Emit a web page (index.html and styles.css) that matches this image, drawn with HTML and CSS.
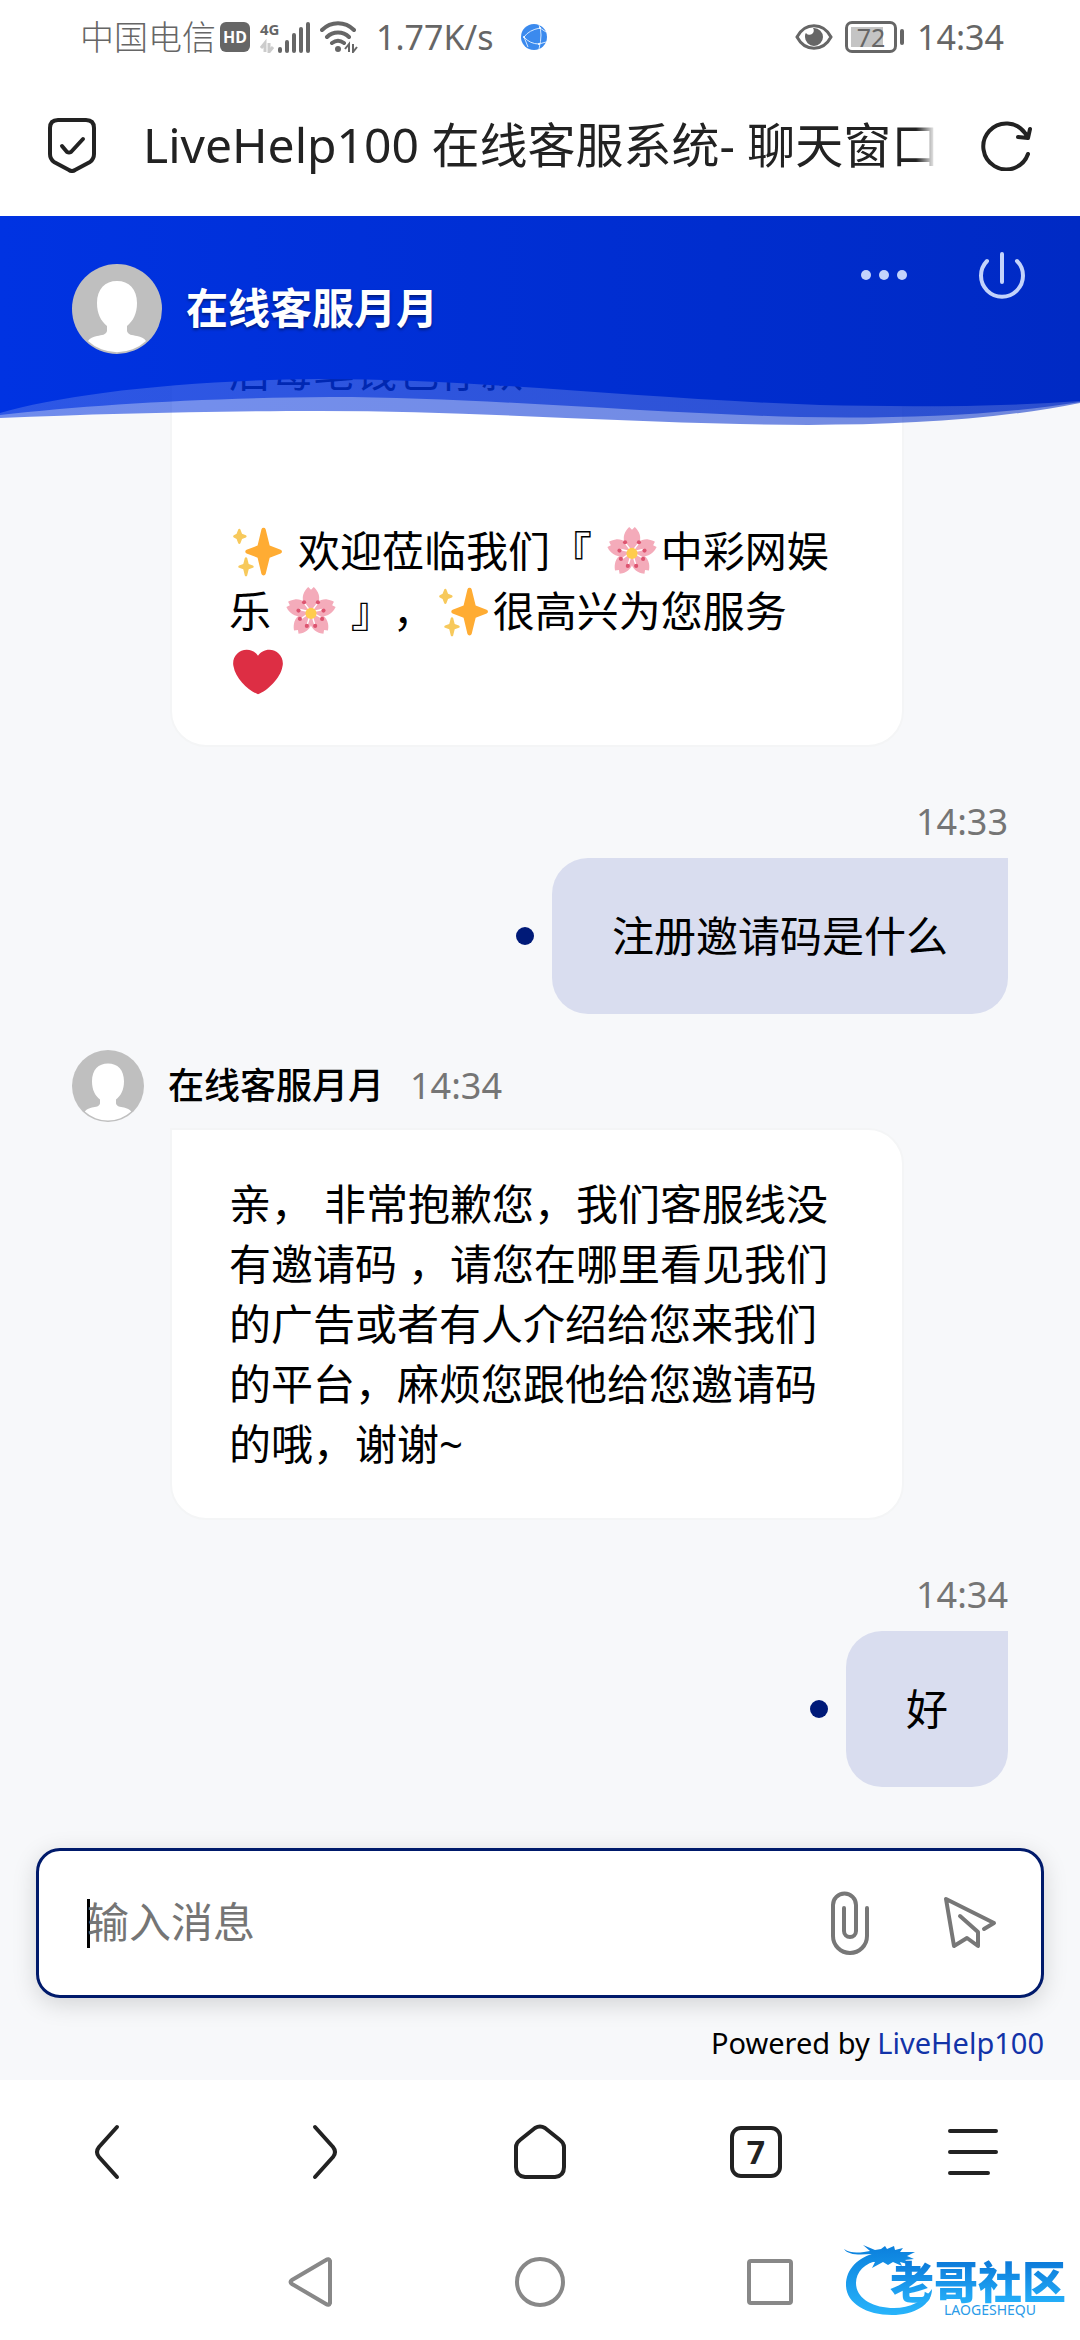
FILE: index.html
```html
<!DOCTYPE html>
<html lang="zh-CN">
  <head>
    <meta charset="utf-8">
    <meta name="viewport" content="width=device-width, initial-scale=1">
    <title>LiveHelp100 在线客服系统- 聊天窗口</title>
    <link rel="stylesheet" href="styles.css">
  </head>
  <body>
    <!-- shared symbols -->
    <svg class="symbols" aria-hidden="true">
      <symbol id="avatar" viewBox="0 0 90 90">
        <circle cx="45" cy="45" r="45" fill="#bfbfbf"/>
        <path d="M45 17c12 0 20 8 20 22 0 11-4 18-10 23v5c1 4 5 4 10 5 4 1 7 2 9 5a43 43 0 0 1-58 0c2-3 5-4 9-5 5-1 9-1 10-5v-5c-6-5-10-12-10-23 0-14 8-22 20-22z" fill="#fff"/>
      </symbol>
      <symbol id="sparkles" viewBox="0 0 36 36">
        <path d="M34.300 16.300l-7.900-2.900L23.500 1.600a1.600 1.600 0 0 0-3 0l-2.800 11.800-7.900 2.900a1.500 1.500 0 0 0 0 2.800l7.900 3 2.800 11.700a1.600 1.600 0 0 0 3 0l2.900-11.700 7.900-3a1.500 1.500 0 0 0 0-2.800z" fill="#ffac33"/>
        <path d="M14.300 27.700l-3-1.100-1.100-4.200a.9.900 0 0 0-1.700 0l-1.100 4.200-3 1.100a.9.900 0 0 0 0 1.700l3 1.100 1.100 4.400a.9.900 0 0 0 1.700 0l1.100-4.400 3-1.100a.9.900 0 0 0 0-1.700zM9.300 5.900L6.500 4.800 5.400 1.900a.9.900 0 0 0-1.700 0L2.600 4.800.6 5.900a.9.900 0 0 0 0 1.600l2 1.100 1.100 3a.9.900 0 0 0 1.700 0l1.100-3 2.800-1.100a.9.900 0 0 0 0-1.600z" fill="#f7c95c"/>
      </symbol>
      <symbol id="blossom" viewBox="0 0 36 36">
        <g fill="#f4abba">
          <path id="petal" d="M18 18c-6-4-7-10-5-14 1-2 2-3 3-4l2 2 2-2c1 1 2 2 3 4 2 4 1 10-5 14z"/>
          <use href="#petal" transform="rotate(72 18 18)"/>
          <use href="#petal" transform="rotate(144 18 18)"/>
          <use href="#petal" transform="rotate(216 18 18)"/>
          <use href="#petal" transform="rotate(288 18 18)"/>
        </g>
        <path d="M18 18L12 10M18 18L24 10M18 18L27 16M18 18L27 23M18 18L21 28M18 18L15 28M18 18L9 24M18 18L9 16" stroke="#fff" stroke-width="1"/>
        <g fill="#dd5470">
          <circle cx="13" cy="11" r="1.500"/><circle cx="23" cy="11" r="1.500"/>
          <circle cx="9" cy="17" r="1.500"/><circle cx="27" cy="17" r="1.500"/>
          <circle cx="10" cy="23" r="1.500"/><circle cx="26" cy="23" r="1.500"/>
          <circle cx="15" cy="28" r="1.500"/><circle cx="21" cy="28" r="1.500"/>
        </g>
        <circle cx="18" cy="19" r="4" fill="#ffcc4d"/>
      </symbol>
      <symbol id="heart" viewBox="0 0 36 36">
        <path d="M35.900 11.800c0-5.400-4.400-9.800-9.800-9.800-3.400 0-6.400 1.700-8.100 4.300C16.300 3.700 13.300 2 9.900 2 4.500 2 .1 6.400.1 11.800c0 .8.100 1.500.3 2.200C1.800 22.500 11.200 31.500 18 34c6.800-2.500 16.200-11.500 17.600-20 .2-.7.300-1.400.3-2.200z" fill="#dd2e44"/>
      </symbol>
    </svg>

    <div class="status-bar">
      <div class="status-left">
        <span class="carrier">中国电信</span>
        <span class="hd">HD</span>
        <div class="signal">
          <span class="net">4G</span>
          <svg viewBox="0 0 50 32" width="50" height="32">
            <path d="M5 31V22L1 27M9 22v9l4-5" fill="none" stroke="#ccc" stroke-width="3"/>
            <path d="M20 28v2M27 21v9M34 14v16M41 8v22M48 3v27" stroke="#666" stroke-width="4" stroke-linecap="round"/>
          </svg>
        </div>
        <svg class="wifi" viewBox="0 0 38 32" width="38" height="32">
          <g fill="none" stroke="#666" stroke-width="4" stroke-linecap="round">
            <path d="M2 9C11 0 25 0 34 9M7 16c6-6 16-6 22 0M12 22c4-3 8-3 12 0"/>
          </g>
          <circle cx="18" cy="28" r="3" fill="#666"/>
          <path d="M29 31v-8l-4 5M33 23v8l4-5" fill="none" stroke="#666" stroke-width="2"/>
        </svg>
        <span class="speed">1.77K/s</span>
        <svg class="globe" viewBox="0 0 26 26" width="26" height="26">
          <circle cx="13" cy="13" r="13" fill="#3b8aee"/>
          <path d="M3 13Q8 6 19 4M3 13Q9 20 18 20M18 1Q22 9 18 25M3 13l4 10M19 4l6 4M18 20l7-2" fill="none" stroke="#d6e9ff"/>
          <g fill="#fff"><circle cx="3" cy="13" r="1"/><circle cx="19" cy="4" r="1"/><circle cx="18" cy="20" r="1"/></g>
        </svg>
      </div>
      <div class="status-right">
        <svg viewBox="0 0 38 26" width="38" height="26">
          <path d="M2 13C10-2 28-2 36 13 28 28 10 28 2 13z" fill="none" stroke="#666" stroke-width="3"/>
          <path d="M19 4a9 9 0 1 1-9 9c0-2 0-3 1-4a4 4 0 1 0 7-5z" fill="#666"/>
        </svg>
        <span class="battery"><span>72</span></span>
        <span class="clock">14:34</span>
      </div>
    </div>

    <div class="title-bar">
      <svg viewBox="0 0 50 56" width="50" height="56" fill="none" stroke="#222" stroke-width="4" stroke-linecap="round" stroke-linejoin="round">
        <path d="M11 3h28q8 0 8 8v26q0 5-4 8L28 53q-3 2-6 0L7 45q-4-3-4-8V11q0-8 8-8z"/>
        <path d="M15 29l5 6q2 1 4 0L36 22"/>
      </svg>
      <h1>LiveHelp100 在线客服系统- 聊天窗口</h1>
      <button class="icon-btn" aria-label="刷新">
        <svg viewBox="0 0 52 52" width="52" height="52" fill="none" stroke="#222" stroke-width="4" stroke-linecap="round" stroke-linejoin="round">
          <path d="M48 35A23 23 0 1 1 45 14l3 4M38 18l10 1 2-9"/>
        </svg>
      </button>
    </div>

    <header class="chat-header">
      <svg class="avatar avatar-lg" role="img" aria-label="在线客服月月"><use href="#avatar"/></svg>
      <h2>在线客服月月</h2>
      <div class="header-actions">
        <button class="icon-btn" aria-label="更多">
          <svg viewBox="0 0 48 48" width="48" height="48" fill="#c3d3fb">
            <circle cx="6" cy="24" r="5"/><circle cx="24" cy="24" r="5"/><circle cx="42" cy="24" r="5"/>
          </svg>
        </button>
        <button class="icon-btn" aria-label="结束">
          <svg viewBox="0 0 48 48" width="48" height="48" fill="none" stroke="#c3d3fb" stroke-width="4" stroke-linecap="round">
            <path d="M9 10a21 21 0 1 0 30 0M24 3v28"/>
          </svg>
        </button>
      </div>
      <svg class="wave" viewBox="0 0 1080 48" preserveAspectRatio="none" aria-hidden="true">
        <defs>
          <linearGradient id="blue" x1="0" x2="1080" y1="0" y2="0" gradientUnits="userSpaceOnUse">
            <stop offset="0" stop-color="#0033e2"/>
            <stop offset="1" stop-color="#002ac4"/>
          </linearGradient>
        </defs>
        <g fill="url(#blue)">
          <path fill-opacity=".55" d="M0 0H1080V24C980 44 860 48 740 45 600 42 460 32 320 32 200 32 100 35 0 39z"/>
          <path fill-opacity=".6" d="M0 0H1080V23C1000 36 900 40 800 38 640 34 480 18 330 18 200 19 90 26 0 36z"/>
          <path d="M0 0H1080V22C1000 28 900 28 820 26 640 20 480 0 320 0 180 1 60 16 0 34z"/>
        </g>
      </svg>
    </header>

    <main class="chat">
      <div class="message received">
        <p class="bubble">后每笔钱包存款<br><br><br><svg class="emoji" role="img" aria-label="✨"><use href="#sparkles"/></svg> 欢迎莅临我们『 <svg class="emoji" role="img" aria-label="🌸"><use href="#blossom"/></svg>中彩网娱乐 <svg class="emoji" role="img" aria-label="🌸"><use href="#blossom"/></svg> 』，<svg class="emoji" role="img" aria-label="✨"><use href="#sparkles"/></svg>很高兴为您服务 <svg class="emoji" role="img" aria-label="❤"><use href="#heart"/></svg></p>
      </div>

      <div class="message sent">
        <time>14:33</time>
        <div class="row"><i class="dot"></i><p class="bubble">注册邀请码是什么</p></div>
      </div>

      <div class="message received">
        <div class="sender">
          <svg class="avatar" role="img" aria-label="在线客服月月"><use href="#avatar"/></svg>
          <strong>在线客服月月</strong>
          <time>14:34</time>
        </div>
        <p class="bubble">亲， 非常抱歉您，我们客服线没有邀请码 ，请您在哪里看见我们的广告或者有人介绍给您来我们的平台，麻烦您跟他给您邀请码的哦，谢谢~</p>
      </div>

      <div class="message sent">
        <time>14:34</time>
        <div class="row"><i class="dot"></i><p class="bubble">好</p></div>
      </div>
    </main>

    <form class="composer">
      <div class="field">
        <i class="caret"></i>
        <input type="text" placeholder="输入消息" aria-label="输入消息">
        <button type="button" class="icon-btn" aria-label="附件">
          <svg viewBox="0 0 60 64" width="60" height="64" fill="none" stroke="#777" stroke-width="4" stroke-linecap="round">
            <path d="M48 17v28a17 17 0 0 1-34 0V14a11 11 0 0 1 23 0v26a6 6 0 0 1-12 0V17"/>
          </svg>
        </button>
        <button type="submit" class="icon-btn" aria-label="发送">
          <svg viewBox="0 0 60 60" width="60" height="60" fill="none" stroke="#777" stroke-width="4" stroke-linecap="round" stroke-linejoin="round">
            <path d="M45 36l10-6L7 6l8 47 13-8 11 8V39L21 23"/>
          </svg>
        </button>
      </div>
      <p class="powered">Powered by <a href="#">LiveHelp100</a></p>
    </form>

    <nav class="browser-nav">
      <button class="icon-btn" aria-label="后退">
        <svg viewBox="0 0 56 56" width="56" height="56"><path d="M37 3L19 23q-4 5 0 10l18 20"/></svg>
      </button>
      <button class="icon-btn" aria-label="前进">
        <svg viewBox="0 0 56 56" width="56" height="56"><path d="M19 3l18 20q4 5 0 10L19 53"/></svg>
      </button>
      <button class="icon-btn" aria-label="主页">
        <svg viewBox="0 0 56 56" width="56" height="56"><path d="M23 4q5-3 10 0l15 12q4 3 4 7v20q0 9-9 10H13q-9-1-9-10V23q0-4 4-7z"/></svg>
      </button>
      <button class="tabs" aria-label="标签页">7</button>
      <button class="icon-btn" aria-label="菜单">
        <svg viewBox="0 0 56 56" width="56" height="56"><path d="M6 7h46M6 28h46M6 49h38"/></svg>
      </button>
    </nav>

    <nav class="system-nav">
      <button class="icon-btn" aria-label="返回">
        <svg viewBox="0 0 52 52" width="52" height="52"><path d="M46 5v42q-1 3-4 1L8 28q-3-2 0-4L42 4q3-2 4 1z"/></svg>
      </button>
      <button class="icon-btn" aria-label="桌面">
        <svg viewBox="0 0 52 52" width="52" height="52"><circle cx="26" cy="26" r="23"/></svg>
      </button>
      <button class="icon-btn" aria-label="最近任务">
        <svg viewBox="0 0 52 52" width="52" height="52"><rect x="5" y="5" width="42" height="42" rx="2"/></svg>
      </button>
      <div class="watermark">
        <svg viewBox="0 0 90 72" width="90" height="72" aria-hidden="true">
          <defs>
            <linearGradient id="dragon" gradientUnits="userSpaceOnUse" x1="0" x2="0" y1="0" y2="70">
              <stop offset="0" stop-color="#0b7fdc"/>
              <stop offset="1" stop-color="#28b4fb"/>
            </linearGradient>
          </defs>
          <g fill="url(#dragon)">
            <!-- body -->
            <path d="M32 8C14 12 2 24 2 40 2 58 22 70 48 70 70 70 88 60 88 44 80 56 66 63 50 63 28 63 12 53 12 38 12 27 20 18 36 15z"/>
            <!-- head, horns and whiskers -->
            <path d="M0 4c6 4 12 4 20 3l6-1-7-6 12 5 6-1 4-3 2 3 7-3 1 4 8-2-3 4h15l-8 4 7 3-9 1 6 5-11-3 2 4-9-4-5 3-5-3-11 6 3-6-8-1 5-7C14 10 4 10 0 4z"/>
          </g>
        </svg>
        <div class="watermark-text">
          <b>老哥社区</b>
          <small>LAOGESHEQU</small>
        </div>
      </div>
    </nav>
  </body>
</html>
```
FILE: styles.css
```css
* {
  box-sizing: border-box;
}

body {
  margin: 0;
  min-height: 100vh;
  display: flex;
  flex-direction: column;
  background: #fff;
  color: #000;
  font-family: "Noto Sans", "Noto Sans CJK SC", sans-serif;
  font-size: 42px;
  text-spacing-trim: space-all;
}

h1, h2, p {
  margin: 0;
}

.symbols {
  position: absolute;
  width: 0;
  height: 0;
}

.icon-btn {
  display: flex;
  align-items: center;
  justify-content: center;
  padding: 0;
  border: none;
  background: none;
  cursor: pointer;
}

/* status bar */
.status-bar {
  display: flex;
  justify-content: space-between;
  align-items: center;
  height: 74px;
  padding: 0 76px 0 80px;
  color: #666;
  font-size: 34px;
  line-height: 40px;
}

.status-left,
.status-right {
  display: flex;
  align-items: center;
}

.carrier {
  font-weight: 300;
}

.hd {
  width: 30px;
  height: 30px;
  margin: 0 10px 0 4px;
  border-radius: 6px;
  background: #666;
  color: #fff;
  font-size: 16px;
  font-weight: 700;
  line-height: 30px;
  text-align: center;
}

.signal {
  position: relative;
  display: flex;
}

.net {
  position: absolute;
  top: -2px;
  left: 0;
  font-size: 15px;
  font-weight: 700;
  line-height: 20px;
}

.wifi {
  margin: 0 18px 0 10px;
}

.globe {
  margin-left: 28px;
}

.battery {
  position: relative;
  width: 52px;
  height: 32px;
  margin: 0 20px 0 12px;
  padding: 3px;
  border: 3px solid #666;
  border-radius: 7px;
  font-size: 25px;
  line-height: 20px;
  text-align: center;
}

.battery span {
  display: block;
  background: linear-gradient(90deg, #c4c4c4 80%, #fff 80%);
}

.battery::after {
  content: "";
  position: absolute;
  top: 5px;
  right: -10px;
  width: 4px;
  height: 16px;
  border-radius: 2px;
  background: #666;
}

/* browser title */
.title-bar {
  display: flex;
  align-items: center;
  height: 142px;
  padding: 0 48px 0 47px;
}

.title-bar h1 {
  flex: 1;
  margin: 0 44px 0 46px;
  overflow: hidden;
  color: #222;
  font-size: 48px;
  font-weight: 400;
  line-height: 72px;
  white-space: nowrap;
  -webkit-mask-image: linear-gradient(90deg, #000 calc(100% - 20px), transparent);
  mask-image: linear-gradient(90deg, #000 calc(100% - 20px), transparent);
}

/* chat header */
.chat-header {
  position: relative;
  z-index: 1;
  display: flex;
  align-items: flex-start;
  height: 163px;
  padding: 48px 54px 0 72px;
  background: linear-gradient(90deg, #0033e2, #002ac4);
}

.chat-header h2 {
  margin-left: 24px;
  color: #fff;
  font-size: 42px;
  font-weight: 700;
  line-height: 88px;
  text-shadow: 0 2px 3px rgba(0, 0, 0, 0.4);
}

.header-actions {
  display: flex;
  gap: 70px;
  margin: -13px 0 0 auto;
}

.wave {
  position: absolute;
  top: 100%;
  left: 0;
  width: 100%;
  height: 48px;
}

.avatar {
  width: 72px;
  height: 72px;
}

.avatar-lg {
  width: 90px;
  height: 90px;
}

/* messages */
.chat {
  flex: 1 0 0;
  display: flex;
  flex-direction: column;
  justify-content: flex-end;
  padding: 0 72px;
  overflow: hidden;
  background: #f7f8fa;
}

.message {
  display: flex;
  flex-direction: column;
  align-items: flex-start;
}

.message time {
  color: #757575;
  font-size: 36px;
  line-height: 48px;
}

.bubble {
  line-height: 60px;
}

.received .bubble {
  width: 734px;
  max-width: 90%;
  margin-left: 98px;
  padding: 44px 57px;
  border: 2px solid #f4f5f6;
  border-radius: 0 36px 36px 36px;
  background: #fff;
}

.sender {
  display: flex;
  align-items: center;
  margin: 36px 0 6px;
}

.sender strong {
  margin: 0 26px 0 24px;
  font-size: 36px;
  font-weight: 500;
  line-height: 48px;
}

.sent {
  align-items: flex-end;
  padding-top: 51px;
}

.sent .row {
  display: flex;
  align-items: center;
  gap: 18px;
  margin-top: 12px;
}

.sent .bubble {
  padding: 48px 60px;
  border-radius: 36px 0 36px 36px;
  background: #d9ddef;
}

.dot {
  width: 18px;
  height: 18px;
  border-radius: 50%;
  background: #001a78;
}

.emoji {
  width: 50px;
  height: 50px;
  margin: -8px 4px 0;
  vertical-align: middle;
}

/* message box */
.composer {
  padding: 61px 36px 14px;
  background: #f7f8fa;
}

.field {
  display: flex;
  align-items: center;
  height: 150px;
  padding: 0 42px 0 48px;
  border: 3px solid #001a6b;
  border-radius: 24px;
  background: #fff;
  box-shadow: 0 6px 24px rgba(0, 0, 0, 0.15);
}

.field .icon-btn {
  margin-left: 60px;
}

.field input {
  flex: 1;
  min-width: 0;
  padding: 0 0 4px;
  border: none;
  outline: none;
  background: none;
  font: inherit;
}

.field input::placeholder {
  color: #757575;
}

.caret {
  width: 3px;
  height: 49px;
  margin-right: -3px;
  background: #000;
}

.powered {
  margin-top: 22px;
  font-size: 29px;
  line-height: 46px;
  text-align: right;
}

.powered a {
  color: #1233a8;
  text-decoration: none;
}

/* browser toolbar */
.browser-nav {
  display: grid;
  grid-template-columns: repeat(5, 1fr);
  align-items: center;
  justify-items: center;
  height: 144px;
}

.browser-nav svg {
  fill: none;
  stroke: #222;
  stroke-width: 4;
  stroke-linecap: round;
  stroke-linejoin: round;
}

.tabs {
  width: 52px;
  height: 52px;
  padding: 0;
  border: 4px solid #222;
  border-radius: 11px;
  background: none;
  color: #222;
  font-family: inherit;
  font-size: 32px;
  font-weight: 700;
  line-height: 44px;
}

/* android navigation */
.system-nav {
  position: relative;
  display: flex;
  align-items: center;
  justify-content: center;
  gap: 178px;
  height: 116px;
}

.system-nav svg {
  fill: none;
  stroke: #888;
  stroke-width: 4;
}

.watermark {
  position: absolute;
  top: 21px;
  right: 14px;
  display: flex;
}

.watermark svg {
  stroke: none;
}

.watermark-text {
  display: flex;
  flex-direction: column;
  align-items: center;
  margin: 15px 0 0 -44px;
}

.watermark b {
  background: linear-gradient(#0b78d8, #25b0fa);
  -webkit-background-clip: text;
  background-clip: text;
  color: transparent;
  font-size: 44px;
  font-weight: 900;
  line-height: 44px;
}

.watermark small {
  margin-left: 24px;
  color: #2a9be8;
  font-size: 14px;
  line-height: 12px;
}
```
